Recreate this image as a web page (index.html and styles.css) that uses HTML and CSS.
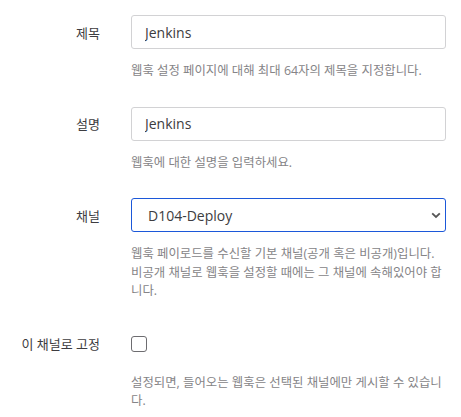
FILE: index.html
```html
<!DOCTYPE html>
<html lang="ko">
<head>
<meta charset="utf-8">
<link rel="stylesheet" href="styles.css">
</head>
<body>
<form class="form">
  <div class="row">
    <label class="label" for="title">제목</label>
    <input class="field" id="title" type="text" value="Jenkins">
    <div class="help">웹훅 설정 페이지에 대해 최대 64자의 제목을 지정합니다.</div>
  </div>
  <div class="row">
    <label class="label" for="desc">설명</label>
    <input class="field" id="desc" type="text" value="Jenkins">
    <div class="help">웹훅에 대한 설명을 입력하세요.</div>
  </div>
  <div class="row">
    <label class="label" for="chan">채널</label>
    <div class="select-wrap">
      <select class="field select" id="chan"><option>D104-Deploy</option></select>
      <svg class="chev" width="10" height="7" viewBox="0 0 10 7"><path d="M1.2 1.3 L5 5 L8.8 1.3" fill="none" stroke="#555" stroke-width="1.8"/></svg>
    </div>
    <div class="help">웹훅 페이로드를 수신할 기본 채널(공개 혹은 비공개)입니다. 비공개 채널로 웹훅을 설정할 때에는 그 채널에 속해있어야 합니다.</div>
  </div>
  <div class="row row-check">
    <label class="label" for="lock">이 채널로 고정</label>
    <div class="check-cell"><input class="check" id="lock" type="checkbox"></div>
    <div class="help">설정되면, 들어오는 웹훅은 선택된 채널에만 게시할 수 있습니다.</div>
  </div>
</form>
</body>
</html>
```
FILE: styles.css
```css
html, body {
  margin: 0;
  background: #fff;
}
body {
  font-family: "Open Sans", "Noto Sans CJK KR", sans-serif;
  color: #3d3c40;
}
.form {
  padding-top: 15px;
}
.row {
  display: grid;
  grid-template-columns: 100px 315px;
  column-gap: 31px;
  margin-bottom: 26px;
}
.label {
  height: 34px;
  display: flex;
  align-items: center;
  justify-content: flex-end;
  font-size: 13px;
  color: #3d3c40;
  white-space: nowrap;
}
.field {
  box-sizing: border-box;
  width: 315px;
  height: 34px;
  margin: 0;
  border: 1px solid #d2d2d4;
  border-radius: 3px;
  padding: 0 13px;
  font-family: "Open Sans", "Noto Sans CJK KR", sans-serif;
  font-size: 14px;
  color: #3d3c40;
  background: #fff;
  outline: none;
}
.select-wrap {
  position: relative;
  width: 315px;
  height: 34px;
}
.select {
  appearance: none;
  -webkit-appearance: none;
  border-color: #1c58d9;
  padding-left: 16px;
  font-size: 14px;
}
.chev {
  position: absolute;
  right: 5px;
  top: 14px;
  pointer-events: none;
}
.help {
  grid-column: 2;
  margin-top: 13px;
  font-size: 12.4px;
  line-height: 18.5px;
  color: #858487;
}
.row-check {
  margin-top: 10px;
}
.check-cell {
  height: 34px;
  display: flex;
  align-items: center;
}
.check {
  appearance: none;
  -webkit-appearance: none;
  width: 16px;
  height: 16px;
  margin: 0;
  border: 1px solid #6d6c70;
  border-radius: 3px;
  background: #fff;
}
```
